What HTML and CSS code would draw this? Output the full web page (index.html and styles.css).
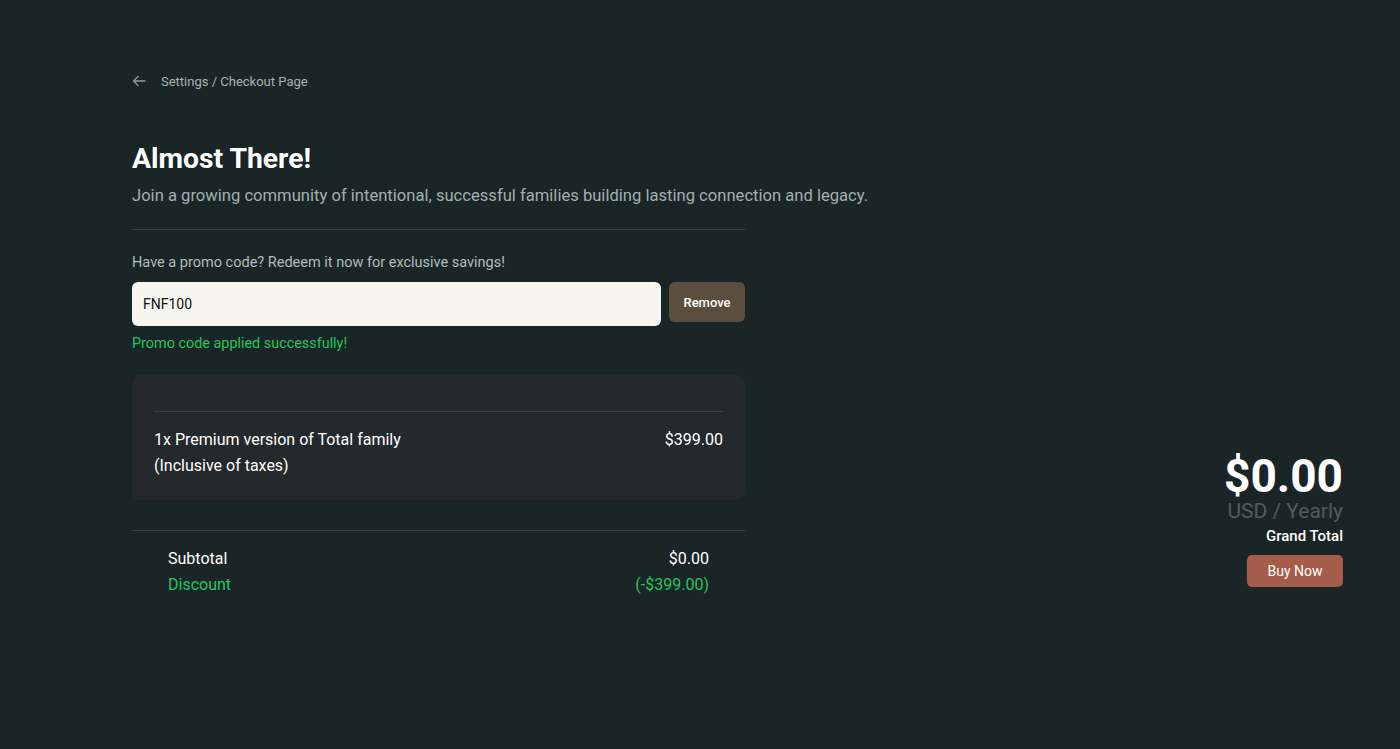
FILE: index.html
```html
<!DOCTYPE html>
<html lang="en">
<head>
<meta charset="utf-8">
<title>Checkout</title>
<link rel="stylesheet" href="styles.css">
</head>
<body>
<div class="page">
  <div class="main">
    <nav class="crumbs">
      <svg class="back" width="14" height="12" viewBox="0 0 14 12" fill="none" stroke="currentColor" stroke-width="1.3" stroke-linecap="round" stroke-linejoin="round"><path d="M13 6H1.5M6 1.5L1.5 6L6 10.5"/></svg>
      <span>Settings / Checkout Page</span>
    </nav>
    <h1 class="title">Almost There!</h1>
    <p class="subtitle">Join a growing community of intentional, successful families building lasting connection and legacy.</p>
    <div class="col">
      <hr class="rule">
      <p class="promo-label">Have a promo code? Redeem it now for exclusive savings!</p>
      <div class="promo-row">
        <div class="promo-input">FNF100</div>
        <button class="btn-remove">Remove</button>
      </div>
      <p class="promo-ok">Promo code applied successfully!</p>
      <div class="card">
        <hr class="card-rule">
        <div class="item">
          <div class="item-name">1x Premium version of Total family<br>(Inclusive of taxes)</div>
          <div class="item-price">$399.00</div>
        </div>
      </div>
      <hr class="rule rule-2">
      <div class="totals">
        <div class="trow"><span>Subtotal</span><span>$0.00</span></div>
        <div class="trow green"><span>Discount</span><span>(-$399.00)</span></div>
      </div>
    </div>
  </div>
  <aside class="summary">
    <div class="amount">$0.00</div>
    <div class="period">USD / Yearly</div>
    <div class="grand">Grand Total</div>
    <button class="btn-buy">Buy Now</button>
  </aside>
</div>
</body>
</html>
```

FILE: styles.css
```css
* { box-sizing: border-box; }
html, body { margin: 0; padding: 0; }
body {
  background: #1a2527;
  color: #ffffff;
  font-family: Roboto, "Liberation Sans", Arial, sans-serif;
  min-height: 749px;
}
.page {
  display: flex;
  align-items: flex-end;
  padding: 72px 57px 0 132px;
}
.main { flex: 1; }
.crumbs {
  display: flex;
  align-items: center;
  gap: 15px;
  color: #a8b3b6;
  font-size: 13px;
  height: 18px;
}
.back { color: #8f9a9d; }
.title {
  margin: 53px 0 0;
  font-size: 28.3px;
  font-weight: 700;
  line-height: 32px;
}
.subtitle {
  margin: 9px 0 0;
  font-size: 16.6px;
  line-height: 24px;
  color: #a3afb2;
}
.col { width: 613px; }
.rule {
  border: 0;
  border-top: 1px solid #364245;
  margin: 21px 0 0;
}
.promo-label {
  margin: 24px 0 0;
  font-size: 14.5px;
  line-height: 18px;
  color: #b3bcbe;
}
.promo-row {
  display: flex;
  gap: 8px;
  margin-top: 10px;
  align-items: flex-start;
}
.promo-input {
  flex: 1;
  height: 44px;
  background: #f6f5f0;
  border-radius: 6px;
  color: #111;
  font-size: 14px;
  display: flex;
  align-items: center;
  padding: 0 11px;
}
.btn-remove {
  width: 76px;
  height: 40px;
  background: #5c4e3f;
  border: 0;
  border-radius: 6px;
  color: #fff;
  font-family: inherit;
  font-size: 13px;
  font-weight: 500;
}
.promo-ok {
  margin: 9px 0 0;
  font-size: 14.4px;
  line-height: 18px;
  color: #22c55e;
}
.card {
  margin-top: 22px;
  background: #24292d;
  border-radius: 8px;
  padding: 36px 22px 21px;
}
.card-rule {
  border: 0;
  border-top: 1px solid #3b4246;
  margin: 0;
}
.item {
  display: flex;
  justify-content: space-between;
  margin-top: 15px;
  font-size: 16px;
  line-height: 26px;
}
.rule-2 { margin-top: 30px; }
.totals {
  padding: 15px 36px 0;
  font-size: 16px;
  line-height: 26px;
}
.trow {
  display: flex;
  justify-content: space-between;
}
.green { color: #22c55e; }
.summary {
  display: flex;
  flex-direction: column;
  align-items: flex-end;
  margin-bottom: 11px;
}
.amount {
  font-size: 46px;
  font-weight: 700;
  line-height: 42px;
}
.period {
  font-size: 21px;
  line-height: 24px;
  color: #4f5c61;
  margin-top: 2px;
}
.grand {
  font-size: 15px;
  line-height: 20px;
  margin-top: 3px;
  font-weight: 500;
}
.btn-buy {
  margin-top: 9px;
  width: 96px;
  height: 32px;
  background: #a55c4b;
  border: 0;
  border-radius: 5px;
  color: #fff;
  font-family: inherit;
  font-size: 14px;
}
```
